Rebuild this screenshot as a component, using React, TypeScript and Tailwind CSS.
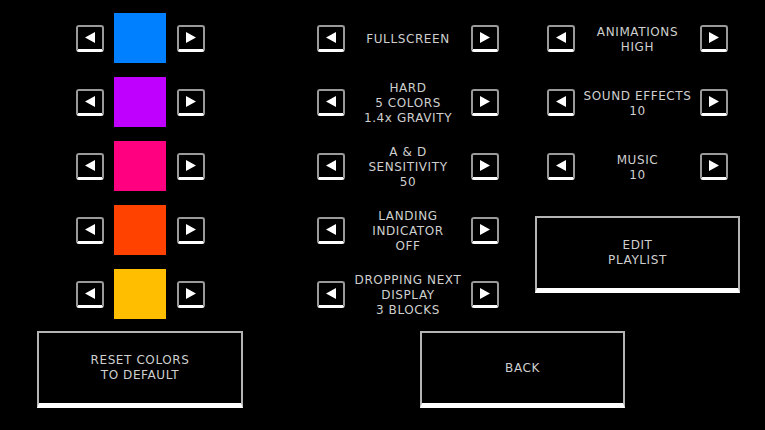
import React from "react";

const swatches = ["#0080ff", "#bf00ff", "#ff0080", "#ff4200", "#ffbf00"];

const gameOptions = [
  ["FULLSCREEN"],
  ["HARD", "5 COLORS", "1.4x GRAVITY"],
  ["A & D", "SENSITIVITY", "50"],
  ["LANDING", "INDICATOR", "OFF"],
  ["DROPPING NEXT", "DISPLAY", "3 BLOCKS"],
];

const audioOptions = [
  ["ANIMATIONS", "HIGH"],
  ["SOUND EFFECTS", "10"],
  ["MUSIC", "10"],
];

function ArrowButton({ dir }: { dir: "left" | "right" }) {
  return (
    <button className="w-[28px] h-[27px] shrink-0 flex items-center justify-center rounded-[3px] border-2 border-[#9a9a9a] border-b-[3px] border-b-white bg-black">
      <svg width="12" height="13" viewBox="0 0 12 13">
        {dir === "left" ? (
          <polygon points="11,1 11,12 1,6.5" fill="#ffffff" />
        ) : (
          <polygon points="1,1 1,12 11,6.5" fill="#ffffff" />
        )}
      </svg>
    </button>
  );
}

function Label({ lines }: { lines: string[] }) {
  return (
    <div className="flex-1 flex flex-col items-center text-center leading-[15px] pt-[3px]">
      {lines.map((l) => (
        <span key={l} className="whitespace-nowrap">
          {l}
        </span>
      ))}
    </div>
  );
}

function BigButton({ lines, className }: { lines: string[]; className: string }) {
  return (
    <button
      className={`h-[77px] flex flex-col items-center justify-center border-2 border-[#b4b4b4] border-b-[5px] border-b-white bg-black leading-[15px] ${className}`}
    >
      {lines.map((l) => (
        <span key={l}>{l}</span>
      ))}
    </button>
  );
}

export default function App() {
  return (
    <div
      className="w-[765px] h-[430px] bg-black overflow-hidden text-[#cfcfcf] text-[12px] tracking-[0.05em]"
      style={{ fontFamily: '"DejaVu Sans", sans-serif' }}
    >
      <div className="flex pt-[6px] h-[326px]">
        {/* colour pickers */}
        <div className="ml-[76px] w-[129px] flex flex-col">
          {swatches.map((c) => (
            <div key={c} className="h-[64px] flex items-center">
              <ArrowButton dir="left" />
              <div className="w-[52px] h-[50px] ml-[10px] mr-[11px]" style={{ backgroundColor: c }} />
              <ArrowButton dir="right" />
            </div>
          ))}
        </div>

        {/* game options */}
        <div className="ml-[112px] w-[182px] flex flex-col">
          {gameOptions.map((lines) => (
            <div key={lines[0]} className="h-[64px] flex items-center">
              <ArrowButton dir="left" />
              <Label lines={lines} />
              <ArrowButton dir="right" />
            </div>
          ))}
        </div>

        {/* audio / visual */}
        <div className="ml-[36px] w-[205px] flex flex-col">
          {audioOptions.map((lines) => (
            <div key={lines[0]} className="h-[64px] px-[12px] flex items-center">
              <ArrowButton dir="left" />
              <Label lines={lines} />
              <ArrowButton dir="right" />
            </div>
          ))}
          <BigButton lines={["EDIT", "PLAYLIST"]} className="mt-[18px] w-[205px]" />
        </div>
      </div>

      <div className="flex mt-[5px]">
        <BigButton lines={["RESET COLORS", "TO DEFAULT"]} className="ml-[37px] w-[206px]" />
        <BigButton lines={["BACK"]} className="ml-[177px] w-[205px]" />
      </div>
    </div>
  );
}
